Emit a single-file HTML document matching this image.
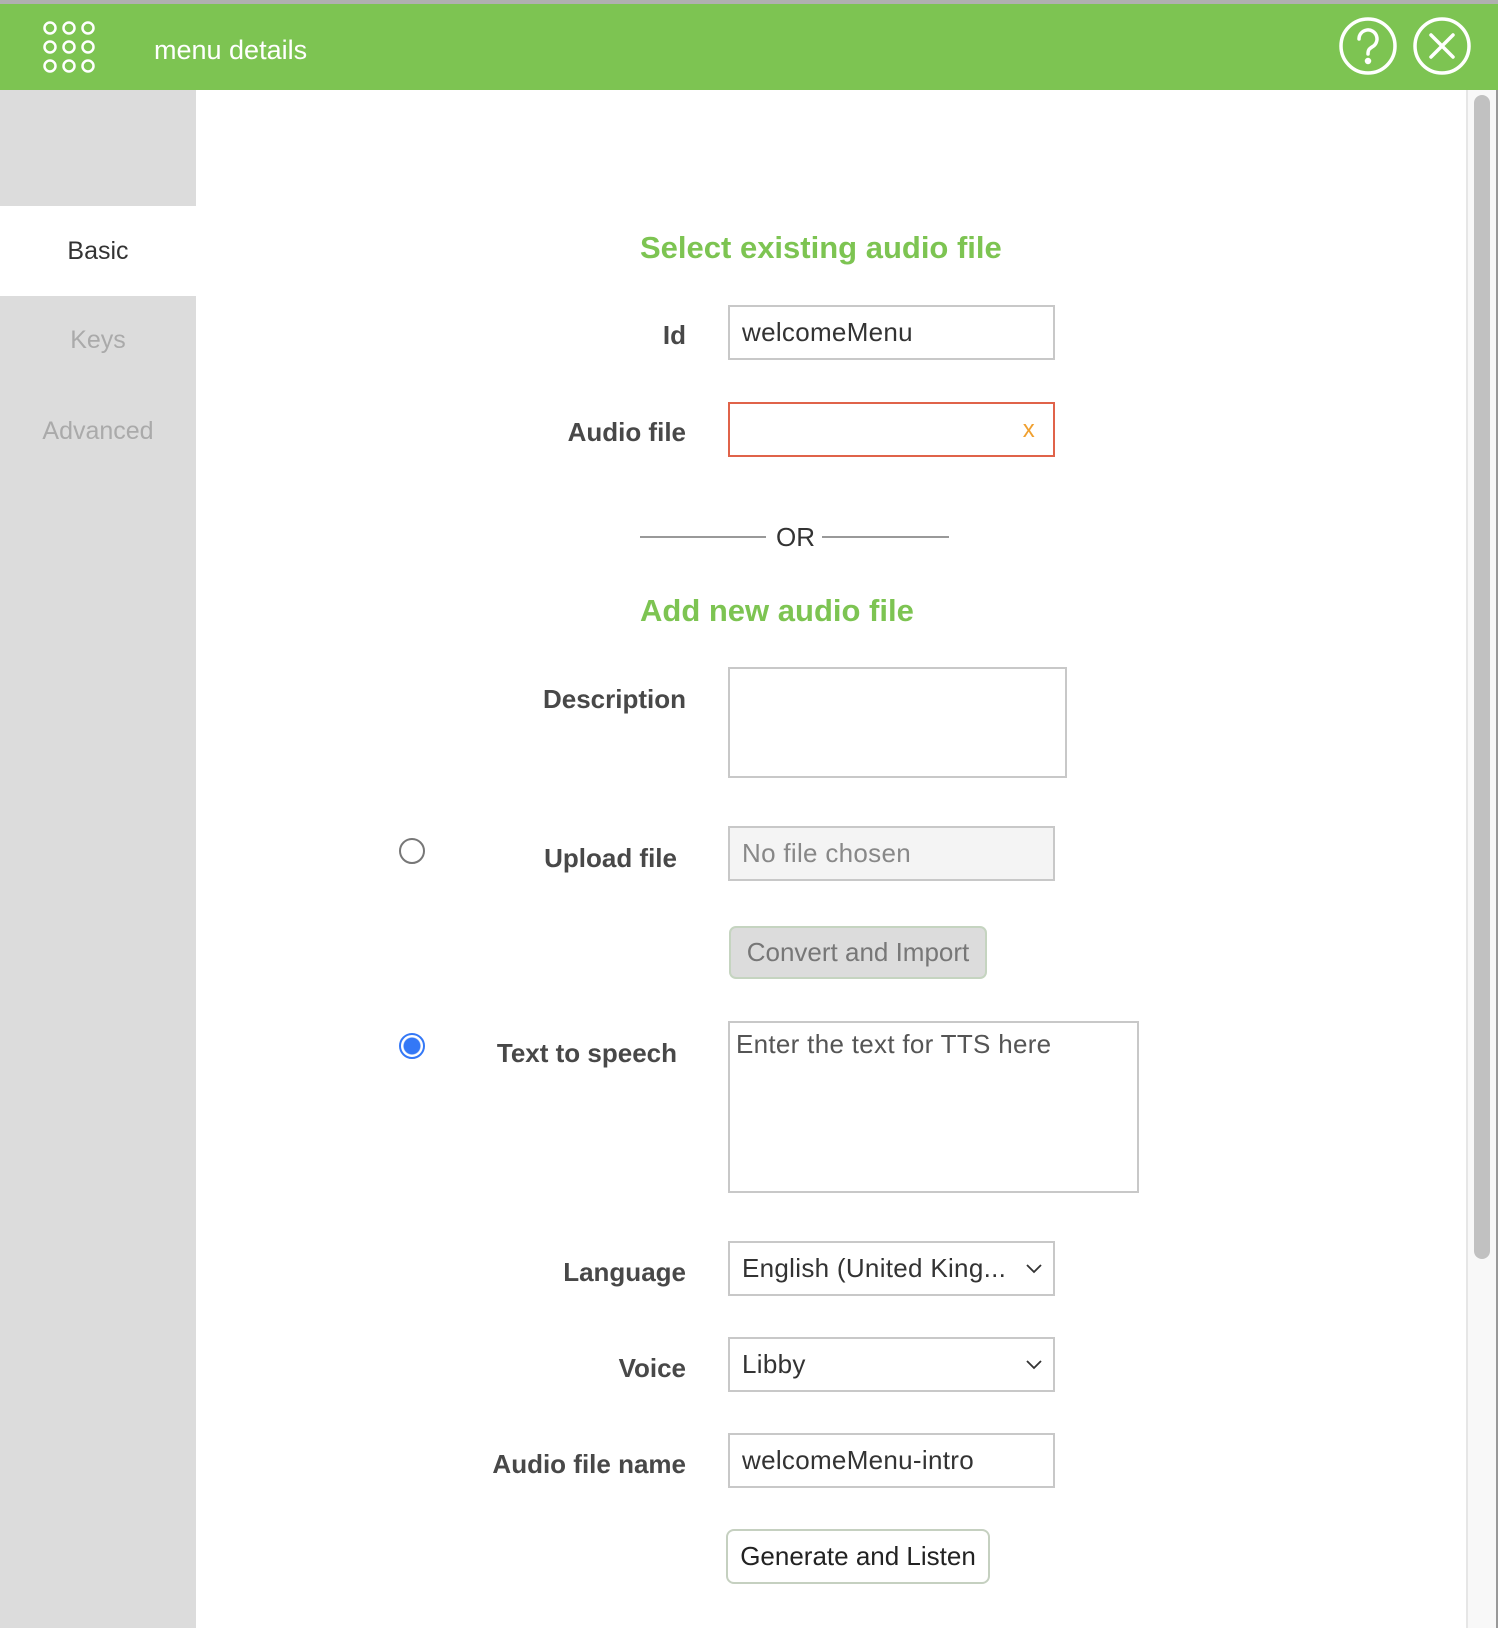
<!DOCTYPE html>
<html><head><meta charset="utf-8"><style>
*{margin:0;padding:0;box-sizing:border-box}
body{width:1498px;height:1628px;overflow:hidden;background:#fff;font-family:"Liberation Sans",Arial,sans-serif;position:relative}
.a{position:absolute}
.hdr{left:0;top:0;width:1498px;height:90px;background:#7dc452;border-top:4px solid #b0b0b0}
.side{left:0;top:90px;width:196px;height:1538px;background:#dcdcdc}
.tab{left:0;width:196px;text-align:center;font-size:25px;color:#aaa}
.lbl{font-weight:bold;font-size:26px;color:#484848;text-align:right;width:400px}
.inp{border:2px solid #c8c8c8;background:#fff;font-size:26px;letter-spacing:0.3px;color:#333;padding-left:12px;display:flex;align-items:center}
.green{color:#7dc452;font-weight:bold;font-size:31px}
.radio{width:26px;height:26px;border-radius:50%;border:2px solid #777}
.chev{position:absolute;right:10px;top:19px}
</style></head><body>
<div class="a hdr"></div>
<svg class="a" style="left:42px;top:20px" width="54" height="54" viewBox="0 0 54 54" fill="none" stroke="#fff" stroke-width="2.5">
<circle cx="8" cy="8" r="5.5"/><circle cx="27" cy="8" r="5.5"/><circle cx="46" cy="8" r="5.5"/>
<circle cx="8" cy="27" r="5.5"/><circle cx="27" cy="27" r="5.5"/><circle cx="46" cy="27" r="5.5"/>
<circle cx="8" cy="46" r="5.5"/><circle cx="27" cy="46" r="5.5"/><circle cx="46" cy="46" r="5.5"/>
</svg>
<div class="a" style="left:154px;top:35px;font-size:27px;color:#fff">menu details</div>
<svg class="a" style="left:1338px;top:16px" width="60" height="60" viewBox="0 0 60 60" fill="none" stroke="#fff" stroke-width="3.5">
<circle cx="30" cy="30" r="27"/>
<path d="M21 23a9 9 0 1 1 13 8c-3 2-4 3-4 7" stroke-linecap="round"/>
<circle cx="30" cy="45" r="1.5" fill="#fff"/>
</svg>
<svg class="a" style="left:1412px;top:16px" width="60" height="60" viewBox="0 0 60 60" fill="none" stroke="#fff" stroke-width="3.5">
<circle cx="30" cy="30" r="27"/>
<path d="M19 19L41 41M41 19L19 41" stroke-linecap="round"/>
</svg>
<div class="a side"></div>
<div class="a tab" style="top:206px;height:90px;background:#fff;color:#333;line-height:90px">Basic</div>
<div class="a tab" style="top:326px">Keys</div>
<div class="a tab" style="top:417px">Advanced</div>
<div class="a" style="left:1466px;top:90px;width:30px;height:1538px;background:#f8f8f8;border-left:2px solid #e6e6e6"></div>
<div class="a" style="left:1474px;top:95px;width:16px;height:1164px;background:#c1c1c1;border-radius:8px"></div>
<div class="a" style="left:1496px;top:90px;width:2px;height:1538px;background:#999"></div>

<div class="a green" style="left:640px;top:230px">Select existing audio file</div>
<div class="a lbl" style="left:286px;top:320px">Id</div>
<div class="a inp" style="left:728px;top:305px;width:327px;height:55px">welcomeMenu</div>
<div class="a lbl" style="left:286px;top:417px">Audio file</div>
<div class="a inp" style="left:728px;top:402px;width:327px;height:55px;border-color:#e0634a"><span style="position:absolute;right:18px;top:12px;color:#f0a030;font-size:24px">x</span></div>
<div class="a" style="left:640px;top:536px;width:126px;height:2px;background:#999"></div>
<div class="a" style="left:822px;top:536px;width:127px;height:2px;background:#999"></div>
<div class="a" style="left:776px;top:522px;font-size:26px;color:#333">OR</div>
<div class="a green" style="left:640px;top:593px">Add new audio file</div>
<div class="a lbl" style="left:286px;top:684px">Description</div>
<div class="a inp" style="left:728px;top:667px;width:339px;height:111px"></div>
<div class="a radio" style="left:399px;top:838px"></div>
<div class="a lbl" style="left:277px;top:843px">Upload file</div>
<div class="a inp" style="left:728px;top:826px;width:327px;height:55px;background:#f4f4f4;color:#888">No file chosen</div>
<div class="a" style="left:729px;top:926px;width:258px;height:53px;background:#dcdcdc;border:2px solid #c5d4c0;border-radius:7px;color:#777;font-size:26px;text-align:center;line-height:49px">Convert and Import</div>
<div class="a radio" style="left:399px;top:1033px;border:2px solid #3478f6;background:radial-gradient(circle,#3478f6 0 8px,#fff 9px)"></div>
<div class="a lbl" style="left:277px;top:1038px">Text to speech</div>
<div class="a inp" style="left:728px;top:1021px;width:411px;height:172px;align-items:flex-start;padding:6px;color:#555">Enter the text for TTS here</div>
<div class="a lbl" style="left:286px;top:1257px">Language</div>
<div class="a inp" style="left:728px;top:1241px;width:327px;height:55px">English (United King...<svg class="chev" width="18" height="12" viewBox="0 0 18 12"><path d="M2 3l7 7 7-7" fill="none" stroke="#333" stroke-width="1.8"/></svg></div>
<div class="a lbl" style="left:286px;top:1353px">Voice</div>
<div class="a inp" style="left:728px;top:1337px;width:327px;height:55px">Libby<svg class="chev" width="18" height="12" viewBox="0 0 18 12"><path d="M2 3l7 7 7-7" fill="none" stroke="#333" stroke-width="1.8"/></svg></div>
<div class="a lbl" style="left:286px;top:1449px">Audio file name</div>
<div class="a inp" style="left:728px;top:1433px;width:327px;height:55px">welcomeMenu-intro</div>
<div class="a" style="left:726px;top:1529px;width:264px;height:55px;background:#fff;border:2px solid #c5d0c0;border-radius:8px;color:#222;font-size:26px;text-align:center;line-height:51px">Generate and Listen</div>
</body></html>
